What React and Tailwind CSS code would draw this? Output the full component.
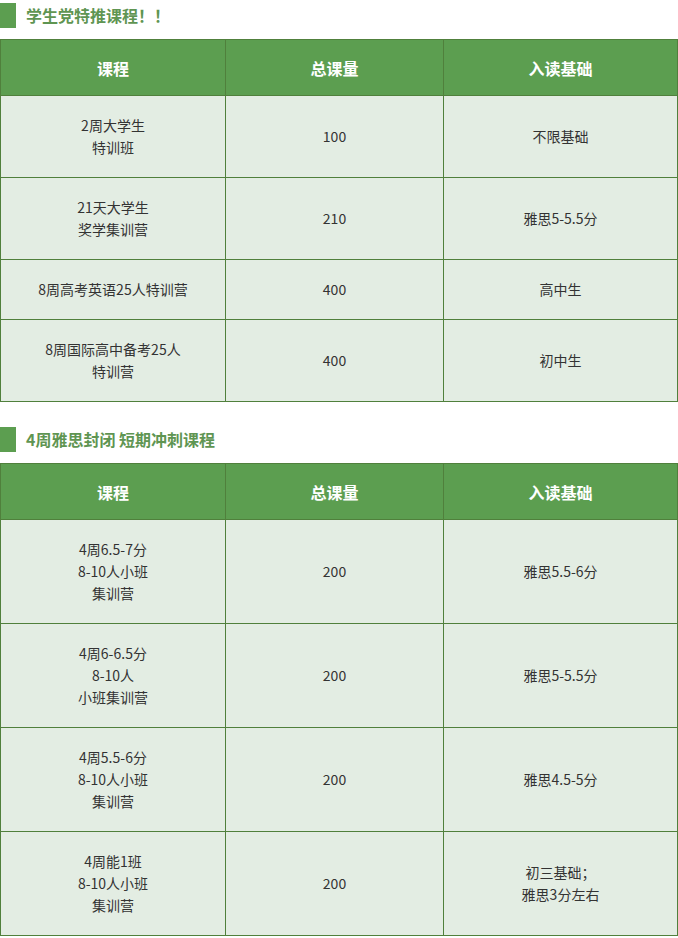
import React from "react";

const font = { fontFamily: '"Microsoft YaHei", "Noto Sans CJK SC", "Noto Sans", sans-serif' };

const t1 = [
  [["2周大学生", "特训班"], "100", ["不限基础"]],
  [["21天大学生", "奖学集训营"], "210", ["雅思5-5.5分"]],
  [["8周高考英语25人特训营"], "400", ["高中生"]],
  [["8周国际高中备考25人", "特训营"], "400", ["初中生"]],
];

const t2 = [
  [["4周6.5-7分", "8-10人小班", "集训营"], "200", ["雅思5.5-6分"]],
  [["4周6-6.5分", "8-10人", "小班集训营"], "200", ["雅思5-5.5分"]],
  [["4周5.5-6分", "8-10人小班", "集训营"], "200", ["雅思4.5-5分"]],
  [["4周能1班", "8-10人小班", "集训营"], "200", ["初三基础；", "雅思3分左右"]],
];

function Title({ children, className }) {
  return (
    <div className={"flex items-center h-[25px] " + className}>
      <div className="w-[16px] h-[25px] bg-[#5c9e50]" />
      <div className="ml-[10px] text-[16px] font-bold text-[#5f9552] leading-[25px]">{children}</div>
    </div>
  );
}

function Lines({ lines }) {
  return lines.map((l, i) => <div key={i}>{l}</div>);
}

function Table({ rows }) {
  const th = "border border-[#50803c] bg-[#5c9e50] text-white text-[16px] font-bold text-center align-middle h-[56px]";
  const td = "border border-[#50803c] bg-[#e3ede3] text-[#333] text-[14px] leading-[22px] text-center align-middle pt-[18px] pb-[19px]";
  return (
    <table className="border-collapse table-fixed w-[677px]">
      <colgroup>
        <col className="w-[225px]" />
        <col className="w-[218px]" />
        <col className="w-[234px]" />
      </colgroup>
      <thead>
        <tr>
          <th className={th}>课程</th>
          <th className={th}>总课量</th>
          <th className={th}>入读基础</th>
        </tr>
      </thead>
      <tbody>
        {rows.map((r, i) => (
          <tr key={i}>
            <td className={td}><Lines lines={r[0]} /></td>
            <td className={td}>{r[1]}</td>
            <td className={td}><Lines lines={r[2]} /></td>
          </tr>
        ))}
      </tbody>
    </table>
  );
}

export default function App() {
  return (
    <div className="w-[678px] h-[938px] bg-white overflow-hidden" style={font}>
      <Title className="mt-[3px] mb-[11px]">学生党特推课程！！</Title>
      <Table rows={t1} />
      <Title className="mt-[25px] mb-[11px]">4周雅思封闭 短期冲刺课程</Title>
      <Table rows={t2} />
    </div>
  );
}
